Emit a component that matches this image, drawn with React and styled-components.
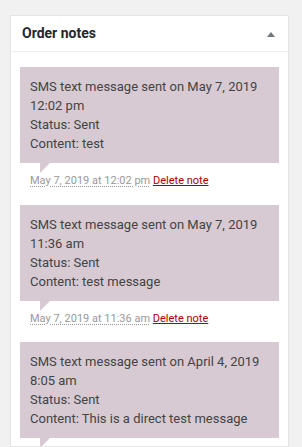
import React from 'react'
import styled, { createGlobalStyle } from 'styled-components'

const notes = [
  {
    lines: ['SMS text message sent on May 7, 2019 12:02 pm', 'Status: Sent', 'Content: test'],
    date: 'May 7, 2019 at 12:02 pm',
  },
  {
    lines: ['SMS text message sent on May 7, 2019 11:36 am', 'Status: Sent', 'Content: test message'],
    date: 'May 7, 2019 at 11:36 am',
  },
  {
    lines: ['SMS text message sent on April 4, 2019 8:05 am', 'Status: Sent', 'Content: This is a direct test message'],
    date: 'April 4, 2019 at 8:05 am',
  },
]

const App = () => {
  return (
    <>
      <GlobalStyle />
      <Panel>
        <Header>
          <Title>Order notes</Title>
          <Toggle width="8" height="5" viewBox="0 0 8 5">
            <polygon points="4,0 8,5 0,5" fill="#72777c" />
          </Toggle>
        </Header>
        <NoteList>
          {notes.map((note, i) => (
            <Note key={i}>
              <NoteContent>
                {note.lines.map((line, j) => (
                  <p key={j}>{line}</p>
                ))}
              </NoteContent>
              <Meta>
                <DateAbbr title={note.date}>{note.date}</DateAbbr>{' '}
                <DeleteLink href="#">Delete note</DeleteLink>
              </Meta>
            </Note>
          ))}
        </NoteList>
      </Panel>
    </>
  )
}

export default App

const GlobalStyle = createGlobalStyle`
  html, body {
    margin: 0;
    padding: 0;
    background: #f1f1f1;
    height: 100%;
    overflow: hidden;
  }
  body {
    font-family: Roboto, "Noto Sans", sans-serif;
  }
  * {
    box-sizing: border-box;
  }
`

const Panel = styled.div`
  margin: 15px 13px 0 10px;
  background: #fff;
  border: 1px solid #e5e5e5;
  box-shadow: 0 1px 1px rgba(0, 0, 0, 0.04);
  height: 432px;
  overflow: hidden;
`

const Header = styled.div`
  display: flex;
  align-items: center;
  justify-content: space-between;
  height: 36px;
  padding: 0 13px 0 11px;
  border-bottom: 1px solid #eee;
`

const Title = styled.h2`
  margin: 0;
  font-size: 14px;
  font-weight: 700;
  color: #23282d;
  line-height: 1.4;
`

const Toggle = styled.svg`
  display: block;
  margin-top: 1px;
`

const NoteList = styled.ul`
  list-style: none;
  margin: 0;
  padding: 15px 9px 0 9px;
`

const Note = styled.li`
  margin: 0 0 5px;
`

const NoteContent = styled.div`
  position: relative;
  background: #d7cad2;
  padding: 10px;
  color: #444;
  font-size: 13px;
  line-height: 19px;

  p {
    margin: 0;
  }

  &:after {
    content: '';
    position: absolute;
    bottom: -10px;
    left: 20px;
    width: 0;
    height: 0;
    border-width: 10px 10px 0 0;
    border-style: solid;
    border-color: #d7cad2 transparent;
  }
`

const Meta = styled.p`
  margin: 0;
  padding: 10px;
  font-size: 11px;
  line-height: 16.5px;
  color: #999;
`

const DateAbbr = styled.abbr`
  text-decoration: underline dotted;
  text-underline-offset: 2px;
  cursor: help;
`

const DeleteLink = styled.a`
  color: #a00;
  text-decoration: underline;
`
